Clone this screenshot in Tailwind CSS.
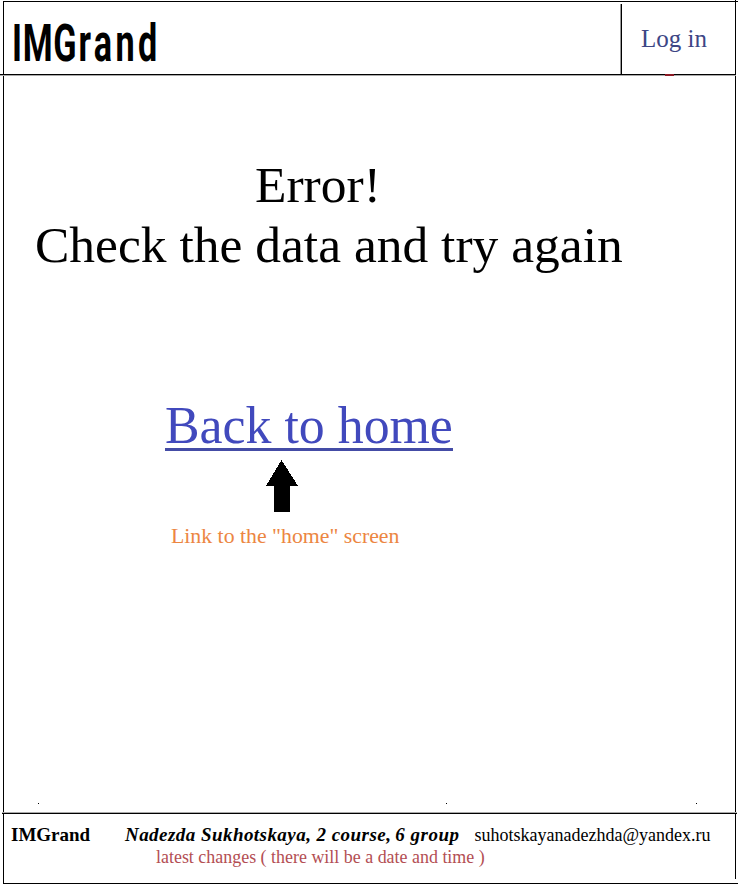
<!DOCTYPE html>
<html lang="en">
<head>
<meta charset="utf-8">
<title>IMGrand</title>
<script src="https://cdn.jsdelivr.net/npm/@tailwindcss/browser@4"></script>
</head>
<body class="bg-white">
<div class="relative flex h-[887px] w-[738px] flex-col overflow-hidden whitespace-nowrap bg-white font-['Liberation_Serif',serif] text-black">
  <!-- page frame -->
  <div class="absolute left-0 top-0 h-full w-full">
    <div class="absolute left-[3px] top-px h-[883px] w-px bg-black"></div>
    <div class="absolute left-[3px] top-px h-px w-[735px] bg-black"></div>
    <div class="absolute left-[735px] top-0 h-[879px] w-px bg-black"></div>
    <div class="absolute left-[3px] top-[883px] h-px w-[735px] bg-black"></div>
  </div>

  <header class="relative flex h-[75px] w-[736px] shrink-0 justify-between border-b border-black pt-1 shadow-[0_1px_0_#aaa]">
    <div class="pl-[12px] pt-[9px]">
      <h1 class="w-[150px] origin-left scale-x-[0.67] font-['Roboto',sans-serif] text-[51px] font-bold leading-[61px]"><span class="tracking-[1px]">IM</span><span class="tracking-[3px]">G</span><span class="tracking-[5px]">rand</span></h1>
    </div>
    <nav class="w-[115px] border-l border-black pl-[19px] pt-[15px] shadow-[-1px_0_0_#999]">
      <a class="block text-[25px] leading-[40px] text-[#3d4685]">Log in</a>
    </nav>
    <span class="absolute left-[665px] top-[74px] h-[2px] w-[9px] bg-[#8b1a24]"></span>
  </header>

  <main class="relative flex h-[738px] shrink-0 flex-col items-start">
    <section class="mt-[80px] text-[51.5px] leading-[60px]">
      <p class="pl-[255px]">Error!</p>
      <p class="pl-[35px]">Check the data and try again</p>
    </section>
    <a class="ml-[165px] mt-[127px] h-[49px] w-[288px] border-b-3 border-[#444ca6] text-[51.84px] leading-[48px] text-[#4149bd]">Back to home</a>
    <svg class="ml-[266px] mt-[9px] h-[52px] w-[32px]" viewBox="0 0 32 52" shape-rendering="crispEdges"><path d="M15.5 0L32 26H24V52H8V26H0Z"/></svg>
    <p class="ml-[171px] mt-[11px] text-[21.8px] leading-[26px] text-[#ec8642]">Link to the "home" screen</p>
    <div class="mt-[254px] flex w-full pl-[38px]">
      <i class="size-px bg-black"></i><i class="ml-[407px] size-px bg-black"></i><i class="ml-[249px] size-px bg-black"></i>
    </div>
  </main>

  <footer class="relative ml-[2px] w-[735px] border-t border-black pt-[10px] shadow-[0_-1px_0_#aaa]">
    <div class="flex h-[22px] items-baseline pl-[9px] leading-[22px]">
      <b class="w-[114px] text-[19px]">IMGrand</b>
      <b class="text-[19px] italic tracking-[0.45px]">Nadezda Sukhotskaya, 2 course,</b>
      <b class="ml-[4px] text-[19px] italic tracking-[0.5px]">6 group</b>
      <span class="ml-[15px] text-[18px]">suhotskayanadezhda@yandex.ru</span>
    </div>
    <p class="pl-[154px] text-[17.95px] leading-[22px] text-[#b34e53]">latest changes ( there will be a date and time )</p>
  </footer>
</div>
</body>
</html>
